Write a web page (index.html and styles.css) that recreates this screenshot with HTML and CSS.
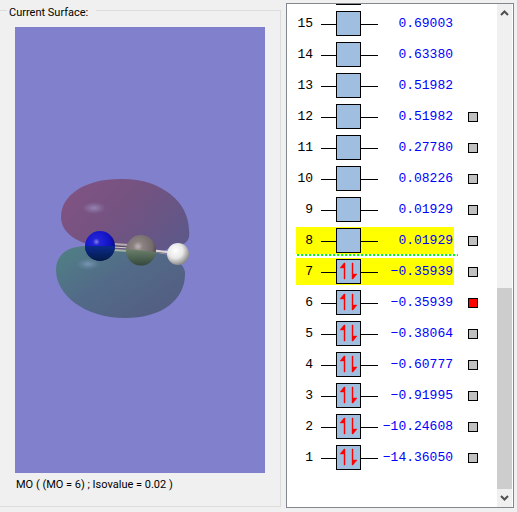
FILE: index.html
```html
<!DOCTYPE html>
<html lang="en">
<head>
  <meta charset="UTF-8">
  <meta name="viewport" content="width=device-width, initial-scale=1.0">
  <title>MO Editor</title>
  <link rel="stylesheet" href="styles.css">
</head>
<body>
  <div class="surface">
    <h2 class="surface-title">Current Surface:</h2>
    <div class="viewer">
      <svg class="molecule" viewBox="0 0 250 446" preserveAspectRatio="xMidYMid meet">
        <defs>
          <linearGradient id="lobeRed" x1="0" y1="0.2" x2="1" y2="0.7">
            <stop offset="0" stop-color="#815383"/>
            <stop offset="0.5" stop-color="#735381"/>
            <stop offset="1" stop-color="#5e5889"/>
          </linearGradient>
          <linearGradient id="lobeGreen" x1="0" y1="0.1" x2="0.8" y2="0.8">
            <stop offset="0" stop-color="#507f85"/>
            <stop offset="0.5" stop-color="#526b88"/>
            <stop offset="1" stop-color="#536083"/>
          </linearGradient>
          <radialGradient id="shineRed">
            <stop offset="0" stop-color="#9a8bb8" stop-opacity="0.9"/>
            <stop offset="1" stop-color="#8a7aa8" stop-opacity="0"/>
          </radialGradient>
          <radialGradient id="shineGreen">
            <stop offset="0" stop-color="#7e9ab8" stop-opacity="0.9"/>
            <stop offset="1" stop-color="#6a88a8" stop-opacity="0"/>
          </radialGradient>
          <radialGradient id="blueTop" cx="0.38" cy="0.36" r="0.65">
            <stop offset="0" stop-color="#8080e8"/>
            <stop offset="0.18" stop-color="#2222d8"/>
            <stop offset="0.7" stop-color="#1212c4"/>
            <stop offset="1" stop-color="#0a0a78"/>
          </radialGradient>
          <radialGradient id="greyTop" cx="0.4" cy="0.38" r="0.65">
            <stop offset="0" stop-color="#bcb4b4"/>
            <stop offset="0.25" stop-color="#8c8282"/>
            <stop offset="0.75" stop-color="#736a6b"/>
            <stop offset="1" stop-color="#4b4248"/>
          </radialGradient>
          <radialGradient id="white" cx="0.38" cy="0.35" r="0.68">
            <stop offset="0" stop-color="#ffffff"/>
            <stop offset="0.5" stop-color="#e8e8e8"/>
            <stop offset="1" stop-color="#858585"/>
          </radialGradient>
          <linearGradient id="blueLow" x1="0" y1="0" x2="0" y2="1">
            <stop offset="0" stop-color="#0c2a90"/>
            <stop offset="1" stop-color="#041c45"/>
          </linearGradient>
          <linearGradient id="greyLow" x1="0" y1="0" x2="0" y2="1">
            <stop offset="0" stop-color="#6c806c"/>
            <stop offset="1" stop-color="#34493c"/>
          </linearGradient>
        </defs>
        <!-- orbital lobes -->
        <path fill="url(#lobeRed)" d="M46 190C46 168 70 152 105 152C146 151 174 175 174 203C175 211 173 215 168 217C160 219 152 222 144 226L112 224L72 217C57 212 46 203 46 190Z"/>
        <path fill="url(#lobeGreen)" d="M41 243C41 228 52 219 72 219L112 223L142 225C155 228 169 236 170 245C171 272 148 291 110 291C70 291 41 268 41 243Z"/>
        <ellipse cx="79" cy="181" rx="12" ry="6" fill="url(#shineRed)"/>
        <ellipse cx="73" cy="237" rx="12" ry="6" fill="url(#shineGreen)"/>
        <!-- bonds -->
        <path stroke="#b6adb0" stroke-width="2" d="M98 217L114 218"/>
        <path stroke="#565058" stroke-width="1" d="M98 219L114 220"/>
        <path stroke="#d5cdd0" stroke-width="1" d="M98 220L114 221"/>
        <path stroke="#a6b5a5" stroke-width="2" d="M98 223L114 224"/>
        <path stroke="#dddada" stroke-width="3" d="M139 224L156 226"/>
        <path stroke="#77757c" stroke-width="1" d="M139 225L156 227"/>
        <!-- atoms -->
        <circle cx="85" cy="219" r="15" fill="url(#blueTop)"/>
        <path fill="url(#blueLow)" d="M70 219L100 219A15 15 0 0 1 70 219Z"/>
        <circle cx="126" cy="223" r="15" fill="url(#greyTop)"/>
        <path fill="url(#greyLow)" d="M111 222L141 225A15 15 0 0 1 111 222Z"/>
        <circle cx="163" cy="227" r="11" fill="url(#white)"/>
      </svg>
    </div>
    <p class="status">MO ( (MO = 6) ; Isovalue = 0.02 )</p>
  </div>
  <div class="orbitals">
    <ul class="levels" id="levels"></ul>
    <div class="scrollbar">
      <button class="scroll-btn" aria-label="Scroll up"><svg width="9" height="8" viewBox="0 0 9 8"><path d="M1 6L4.5 2.5L8 6"/></svg></button>
      <div class="track"><div class="thumb"></div></div>
      <button class="scroll-btn" aria-label="Scroll down"><svg width="9" height="8" viewBox="0 0 9 8"><path d="M1 2L4.5 5.5L8 2"/></svg></button>
    </div>
  </div>
  <script src="script.js"></script>
</body>
</html>
```
FILE: styles.css
```css
*{
  box-sizing: border-box;
  margin: 0;
  padding: 0;
}
body{
  display: grid;
  grid-template-columns: minmax(0, 281fr) minmax(0, 228fr);
  gap: 5px;
  height: 100vh;
  padding: 3px 3px 4px 0;
  background-color: #f0f0f0;
  font-family: Roboto, "Liberation Sans", Arial, sans-serif;
  font-size: 11px;
  color: #000;
}
.surface{
  display: flex;
  flex-direction: column;
  margin: 7px 0 1px;
  padding: 0 15px 12px;
  border: 1px solid #dcdcdc;
  border-left: 0;
}
.surface-title{
  align-self: flex-start;
  height: 16px;
  margin: -6px 0 6px -8px;
  padding: 0 8px 0 2px;
  background-color: #f0f0f0;
  font-size: 11px;
  font-weight: normal;
  line-height: 16px;
}
.viewer{
  flex: 1;
  min-height: 0;
  background-color: #8080cc;
}
.molecule{
  display: block;
  width: 100%;
  height: 100%;
}
.status{
  height: 18px;
  margin-top: 3px;
  padding-left: 1px;
  line-height: 18px;
}
.orbitals{
  display: flex;
  border: 1px solid #828790;
  background-color: #fff;
  overflow: hidden;
}
/* list is scrolled to its lower end */
.levels{
  flex: 1;
  margin-top: -25px;
  padding-left: 9px;
  list-style: none;
}
.level{
  display: flex;
  align-items: center;
  height: 27px;
  margin-bottom: 4px;
}
.level-label{
  display: flex;
  align-items: center;
  width: 158px;
  height: 27px;
  font-family: "Liberation Mono", "Courier New", monospace;
  font-size: 13px;
}
.num{
  width: 17px;
  text-align: right;
}
.slot{
  width: 57px;
  height: 25px;
  margin-left: 8px;
}
.energy{
  flex: 1;
  padding-right: 1px;
  color: #0000ff;
  text-align: right;
  white-space: nowrap;
}
.check{
  appearance: none;
  width: 10px;
  height: 10px;
  margin: 0 0 0 14px;
  border: 1px solid #000;
  background-color: #c0c0c0;
}
.check:checked{
  background-color: #ff0000;
}
.frontier .level-label{
  background-color: #ffff00;
}
/* homo / lumo divider */
.divider{
  height: 2px;
  width: 161px;
  margin: -4px 0 2px 1px;
  background: repeating-linear-gradient(90deg, #00ff00 0 2px, transparent 2px 4px);
}
.scrollbar{
  display: flex;
  flex-direction: column;
  width: 16px;
  border-right: 1px solid #fff;
  background-color: #f0f0f0;
}
.scroll-btn{
  display: flex;
  align-items: center;
  justify-content: center;
  height: 18px;
  border: 0;
  background-color: #f0f0f0;
}
.scroll-btn path{
  fill: none;
  stroke: #505050;
  stroke-width: 2;
}
.track{
  flex: 1;
  display: flex;
  align-items: flex-end;
}
.thumb{
  width: 100%;
  height: 43%;
  background-color: #cdcdcd;
}
```
FILE: script.js
```js
var levels = [
  [16, ""], [15, "0.69003"], [14, "0.63380"], [13, "0.51982"], [12, "0.51982"],
  [11, "0.27780"], [10, "0.08226"], [9, "0.01929"], [8, "0.01929"],
  [7, "\u22120.35939"], [6, "\u22120.35939"], [5, "\u22120.38064"],
  [4, "\u22120.60777"], [3, "\u22120.91995"], [2, "\u221210.24608"], [1, "\u221214.36050"]
];
var list = document.getElementById("levels");
var arrows = '<path d="M24 20V4H23L19 9H23V20Z M31 4V20H32L36 15H32V4Z" fill="#f00" stroke="#f00" stroke-width="0.4"/>';
var html = "";

for (var i = 0; i < levels.length; i++) {
  var n = levels[i][0];
  var frontier = n == 7 || n == 8;
  html += '<li class="level' + (frontier ? " frontier" : "") + '">';
  html += '<label class="level-label" for="mo' + n + '"><span class="num">' + (n < 16 ? n : "") + '</span>';
  html += '<svg class="slot" viewBox="0 0 57 25"><path d="M0 13.5H57" stroke="#000"/>';
  html += '<rect x="15.5" y="0.5" width="24" height="24" fill="#a0bee0" stroke="#000"/>';
  html += (n < 8 ? arrows : "") + '</svg>';
  html += '<span class="energy">' + levels[i][1] + '</span></label>';
  if (n < 13) {
    html += '<input class="check" type="checkbox" id="mo' + n + '"' + (n == 6 ? " checked" : "") + '>';
  }
  html += '</li>';
  if (n == 8) {
    html += '<li class="divider"></li>';
  }
}
list.innerHTML = html;
```
